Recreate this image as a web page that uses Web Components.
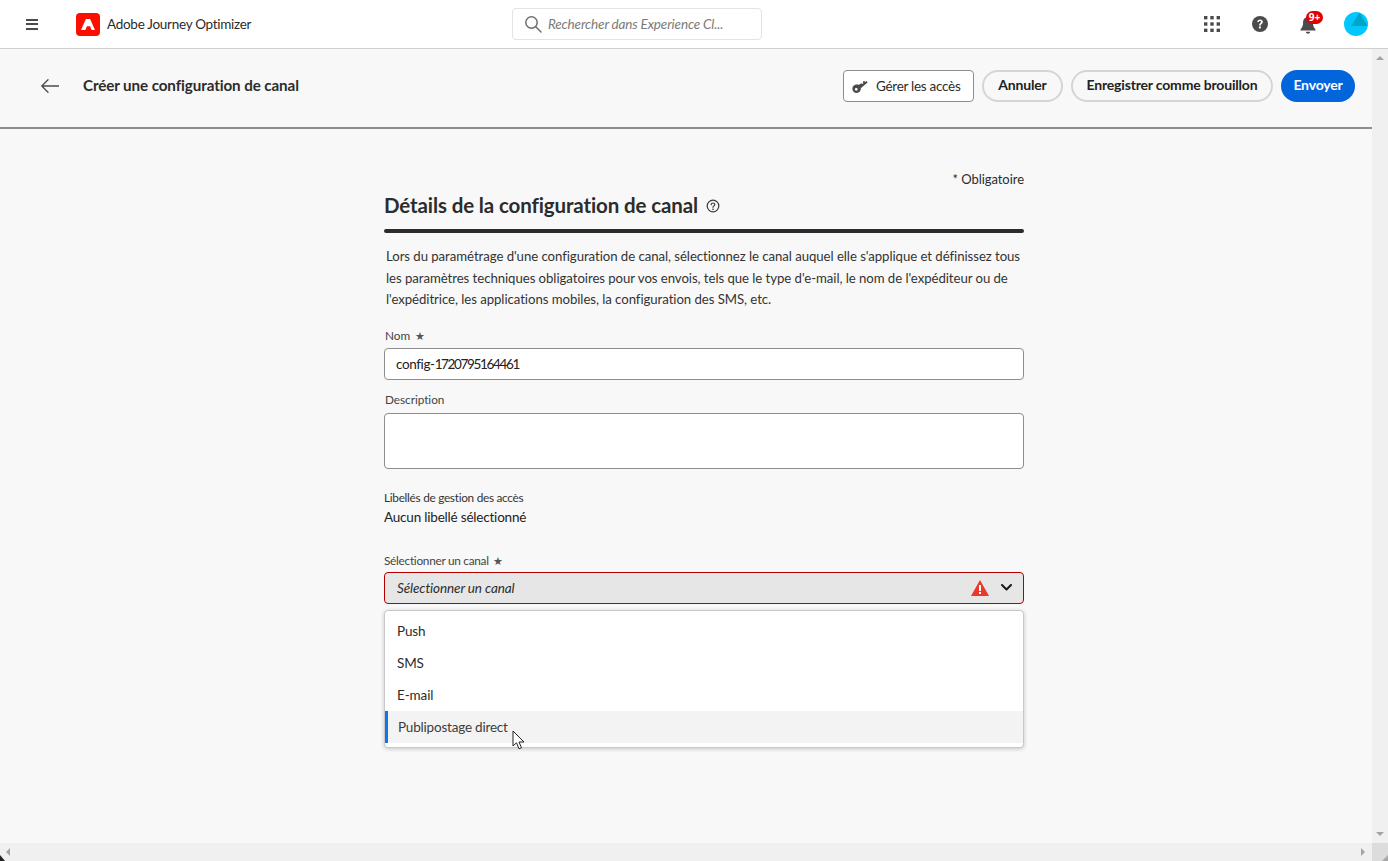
<!DOCTYPE html>
<html lang="fr"><head><meta charset="utf-8"><title>Adobe Journey Optimizer</title>
<style>
html,body{margin:0;height:100%;overflow:hidden}
body{font-family:Lato,"Open Sans",sans-serif;color:#222;background:#f8f8f8}
</style></head><body>
<ajo-app></ajo-app>
<script>
function def(name,css,html){
  customElements.define(name,class extends HTMLElement{
    constructor(){super();const r=this.attachShadow({mode:'open'});
      r.innerHTML='<style>'+css+'</style>'+html;}
  });
}
def('ajo-topbar',`
:host{display:flex;align-items:center;height:48px;background:#fff;border-bottom:1px solid #cfcfcf;position:relative;flex:none}
.burger{margin-left:26px;width:12px;display:flex;flex-direction:column;gap:2.5px}
.burger i{display:block;height:2px;background:#4b4b4b}
.logo{margin-left:38px;width:24px;height:23px;background:#fa0f00;border-radius:4px;display:flex;align-items:center;justify-content:center}
.name{margin-left:7px;width:144px;font-size:13.5px;color:#2c2c2c;letter-spacing:-.28px;white-space:nowrap}
.search{margin-left:261px;width:248px;height:30px;border:1px solid #e3e3e3;border-radius:4px;display:flex;align-items:center}
.search svg{margin-left:11px}
.search span{margin-left:6px;font-size:13.5px;font-style:italic;color:#7a7a7a;letter-spacing:-.15px;white-space:nowrap}
.right{margin-left:auto;display:flex;align-items:center;margin-right:20px}
.bell{position:relative;width:18px;height:20px;margin-left:32px}
.badge{position:absolute;left:6px;top:-3px;width:17px;height:13px;background:#e30000;color:#fff;border-radius:7px;font:700 10px/13px "Open Sans",sans-serif;text-align:center}
.avatar{margin-left:26px;display:block}
.help{margin-left:32px;display:block}
`,`
<div class="burger"><i></i><i></i><i></i></div>
<div class="logo"><svg width="14" height="11" viewBox="0 0 14 11"><path fill="#fff" d="M4.900 0h4.200L14 11h-3.400L9.100 7.300H6l2-4.600L4.300 11H0z"/></svg></div>
<div class="name">Adobe Journey Optimizer</div>
<div class="search"><svg width="18" height="18" viewBox="0 0 18 18" fill="none" stroke="#6e6e6e" stroke-width="1.5"><circle cx="7.5" cy="7.5" r="5.7"/><path d="M11.8 11.8 17 17" stroke-linecap="round"/></svg><span>Rechercher dans Experience Cl...</span></div>
<div class="right">
<svg width="16" height="16" viewBox="0 0 16 16" fill="#4b4b4b"><rect x="0" y="0" width="3.4" height="3.4"/><rect x="6.3" y="0" width="3.4" height="3.4"/><rect x="12.6" y="0" width="3.4" height="3.4"/><rect x="0" y="6.3" width="3.4" height="3.4"/><rect x="6.3" y="6.3" width="3.4" height="3.4"/><rect x="12.6" y="6.3" width="3.4" height="3.4"/><rect x="0" y="12.6" width="3.4" height="3.4"/><rect x="6.3" y="12.6" width="3.4" height="3.4"/><rect x="12.6" y="12.6" width="3.4" height="3.4"/></svg>
<svg class="help" width="16" height="16" viewBox="0 0 17 17"><circle cx="8.5" cy="8.5" r="8.5" fill="#4b4b4b"/><path d="M5.500 6.400c.2-1.700 1.400-2.700 3.100-2.700 1.800 0 3 1 3 2.500 0 2-2.200 2.100-2.200 3.900H7.500c-.1-2.500 2-2.600 2-3.800 0-.6-.4-1-1-1-.8 0-1.100.5-1.200 1.200z" fill="#fff"/><rect x="7.400" y="11" width="2" height="2.200" fill="#fff"/></svg>
<div class="bell"><svg width="16" height="20" viewBox="0 0 16 20" fill="#4b4b4b" style="position:absolute;left:0;top:2px"><path d="M8 1c-3 0-4.900 2.300-4.900 5.300 0 3.800-.9 5.200-2.600 7.100v1.100h15v-1.100c-1.700-1.900-2.600-3.300-2.600-7.100C12.900 3.300 11 1 8 1z"/><path d="M5.800 15.800h4.400c-.2 1.300-1.100 2-2.200 2s-2-.7-2.200-2z"/></svg><div class="badge">9+</div></div>
<svg class="avatar" width="24" height="24" viewBox="0 0 24 24"><circle cx="12" cy="12" r="12" fill="#00c8ff"/><path d="M15.500 .6 23.600 14H7z" fill="#00a5c8"/></svg>
</div>`);

def('ajo-button',`
:host{display:inline-flex;align-items:center;justify-content:center;box-sizing:border-box;height:32px;border-radius:16px;border:2px solid #d5d5d5;background:#f8f8f8;color:#222;font-size:14px;font-weight:700;letter-spacing:-.18px;white-space:nowrap;flex:none;padding-bottom:3px}
:host([variant=primary]){background:#0265dc;border-color:#0265dc;color:#fff}
:host([variant=quiet]){border:1px solid #8e8e8e;border-radius:4px;background:#fff;font-weight:400;font-size:13.5px;letter-spacing:-.28px;color:#2c2c2c;justify-content:flex-start;padding:0 0 0 8px}
`,`<slot></slot>`);

def('ajo-actionbar',`
:host{display:flex;align-items:center;height:74px;padding-bottom:4px;border-bottom:2px solid #8e8e8e;flex:none;background:#f8f8f8}
.back{margin-left:41px;display:block}
h1{margin:0 0 2px 24px;font-size:15.2px;font-weight:700;color:#2c2c2c;letter-spacing:-.1px;white-space:nowrap}
.acts{margin-left:auto;margin-right:17px;display:flex;gap:8px;align-items:center}
svg.key{margin-right:7px;flex:none}
`,`
<svg class="back" width="18" height="14" viewBox="0 0 18 14" fill="none" stroke="#4b4b4b" stroke-width="1.3" stroke-linecap="round" stroke-linejoin="round"><path d="M17.500 7H.8M7 .8.800 7 7 13.200"/></svg>
<h1>Créer une configuration de canal</h1>
<div class="acts">
<ajo-button variant="quiet" style="width:131px"><svg class="key" width="17" height="16" viewBox="0 0 18 16" fill="#4b4b4b" style="vertical-align:middle"><path d="M5.500 6.500a4.500 4.500 0 1 0 3.800 3.800l7.200-6-.9-1.700-1.700 1.200-1.100-1.300-1.500 1.200.8 1.300-1.200 1-.9-1L7.400 6.800a4.500 4.500 0 0 0-1.900-.3zM4.500 10a1.500 1.500 0 1 1 0 3 1.500 1.500 0 0 1 0-3z" fill-rule="evenodd"/></svg>Gérer les accès</ajo-button>
<ajo-button style="width:81px">Annuler</ajo-button>
<ajo-button style="width:202px">Enregistrer comme brouillon</ajo-button>
<ajo-button variant="primary" style="width:74px">Envoyer</ajo-button>
</div>`);

def('ajo-field',`
:host{display:block}
label{display:block;font-size:11.8px;color:#444;line-height:18px;margin-left:1px;white-space:nowrap;letter-spacing:-.05px}
:host([flush]) label{margin-left:0;letter-spacing:-.27px}
.box{margin-top:var(--gap,2px)}
`,`<label><slot name="label"></slot></label><div class="box"><slot></slot></div>`);

def('ajo-input',`
:host{display:flex;align-items:center;box-sizing:border-box;height:32px;background:#fff;border:1px solid #8e8e8e;border-radius:4px;padding:0 11px;font-size:13.5px;color:#222;letter-spacing:-.4px}
:host([tall]){height:56px}
`,`<slot></slot>`);

def('ajo-select',`
:host{display:flex;align-items:center;box-sizing:border-box;height:32px;background:#e6e6e6;border:1px solid #b40000;border-radius:4px;padding:0 11px 0 12px;font-size:13.5px;font-style:italic;color:#2c2c2c;letter-spacing:-.1px}
.sp{flex:1}
.warn{margin-right:12px;display:block}
`,`<slot></slot><span class="sp"></span>
<svg class="warn" width="18" height="16" viewBox="0 0 18 16"><path style="fill:#ea3829" d="M9 0 18 16H0z"/><rect x="8" y="5" width="2" height="6" fill="#fff"/><rect x="8" y="12" width="2" height="2" fill="#fff"/></svg>
<svg width="11" height="7" viewBox="0 0 11 7" fill="none" stroke="#1a1a1a" stroke-width="2" stroke-linecap="round" stroke-linejoin="round"><path d="M1 1l4.500 4.500L10 1"/></svg>`);

def('ajo-menu',`
:host{display:block;position:absolute;left:0;right:0;top:38px;box-sizing:border-box;height:138px;background:#fff;border:1px solid #c8c8c8;border-radius:4px;padding:4px 0;box-shadow:0 1px 4px rgba(0,0,0,.2);z-index:5}
`,`<slot></slot>`);

def('ajo-menu-item',`
:host{display:flex;align-items:center;height:32px;padding-left:12px;font-size:13.5px;color:#2c2c2c;box-sizing:border-box;letter-spacing:-.12px;white-space:nowrap}
:host([active]){background:#f3f3f3;border-left:3px solid #1473e6;padding-left:10px;color:#3c3c3c;letter-spacing:-.2px}
`,`<slot></slot>`);

def('ajo-form',`
:host{display:block;width:640px;margin-left:384px;position:relative}
.req{text-align:right;font-size:13px;line-height:16px;color:#2c2c2c;padding-top:42px;letter-spacing:-.05px}
h2{margin:4px 0 0;display:flex;align-items:center;font-size:20.5px;line-height:28px;font-weight:700;color:#2c2c2c;letter-spacing:-.12px;white-space:nowrap}
h2 svg{margin-left:8px;margin-top:2px}
.rule{height:4px;background:#2c2c2c;border-radius:2px;margin-top:10px}
p{margin:13px 0 0 2px;font-size:13.2px;line-height:21.5px;color:#333;letter-spacing:-.055px;width:640px;white-space:nowrap}
.name{margin-top:16px;--gap:3px}.desc{margin-top:11px;--gap:4px}
.lbl{margin-top:21px;font-size:11.8px;line-height:16px;color:#333;white-space:nowrap;letter-spacing:-.28px}
.val{font-size:13.5px;line-height:20px;margin-top:1px;color:#222;letter-spacing:-.2px}
.chan{margin-top:25px;position:relative}
.star{font-size:11px;margin-left:2px;color:#555;letter-spacing:0;line-height:1}
.num{letter-spacing:-1.35px}
`,`
<div class="req">* Obligatoire</div>
<h2>Détails de la configuration de canal<svg width="14" height="14" viewBox="0 0 14 14" fill="none" stroke="#3a3a3a" stroke-width="1.2"><circle cx="7" cy="7" r="5.8"/><path d="M5.200 5.600C5.300 4.600 6 4 7 4c1.100 0 1.800.6 1.800 1.500C8.800 6.800 7 6.900 7 8.300" stroke-linecap="round"/><circle cx="7" cy="10.200" r=".5" fill="#3a3a3a" stroke-width=".6"/></svg></h2>
<div class="rule"></div>
<p>Lors du paramétrage d'une configuration de canal, sélectionnez le canal auquel elle s'applique et définissez tous<br>les paramètres techniques obligatoires pour vos envois, tels que le type d'e-mail, le nom de l'expéditeur ou de<br>l'expéditrice, les applications mobiles, la configuration des SMS, etc.</p>
<ajo-field class="name"><span slot="label">Nom <span class="star">★</span></span><ajo-input><span>config-<span class="num">1720795164461</span></span></ajo-input></ajo-field>
<ajo-field class="desc"><span slot="label">Description</span><ajo-input tall></ajo-input></ajo-field>
<div class="lbl">Libellés de gestion des accès</div>
<div class="val">Aucun libellé sélectionné</div>
<div class="chan">
<ajo-field flush><span slot="label">Sélectionner un canal <span class="star">★</span></span>
<div style="position:relative"><ajo-select>Sélectionner un canal</ajo-select>
<ajo-menu><ajo-menu-item>Push</ajo-menu-item><ajo-menu-item>SMS</ajo-menu-item><ajo-menu-item>E-mail</ajo-menu-item><ajo-menu-item active>Publipostage direct</ajo-menu-item></ajo-menu>
<svg style="position:absolute;left:128px;top:158px;z-index:6;display:block" width="14" height="20" viewBox="0 0 14 20"><path d="M1 1v15l3.500-3.200 2.500 6 2.500-1-2.500-5.800h5z" fill="#fff" stroke="#222" stroke-width="1"/></svg>
</div></ajo-field>
</div>`);

def('ajo-app',`
:host{display:flex;flex-direction:column;height:861px;width:1388px;overflow:hidden;background:#f8f8f8;position:relative}
.mid{flex:1;display:flex;min-height:0}
.main{flex:1;min-width:0;display:flex;flex-direction:column}
.vbar,.hbar{background:#f0f0f0;flex:none;display:flex;box-sizing:border-box}
.vbar{width:16px;flex-direction:column;justify-content:space-between;align-items:center;padding:7px 0}
.hbar{height:18px;align-items:center;padding-left:6px}
.corner{width:16px;height:18px;background:#dcdcdc;position:relative}
.corner::after{content:"";position:absolute;right:0;bottom:0;border:3px solid transparent;border-right-color:#a8a8a8;border-bottom-color:#a8a8a8}
.t{width:0;height:0;display:block}
.u{border:4px solid transparent;border-top:0;border-bottom:4px solid #a3a3a3}
.d{border:4px solid transparent;border-bottom:0;border-top:4px solid #a3a3a3}
.l{border:4px solid transparent;border-left:0;border-right:4px solid #a3a3a3}
.r{border:4px solid transparent;border-right:0;border-left:4px solid #a3a3a3;margin-left:auto;margin-right:7px}
.grip{position:absolute;left:0;bottom:0;width:0;height:0;border-left:5px solid #222;border-top:6px solid transparent}
`,`
<ajo-topbar></ajo-topbar>
<div class="mid">
<div class="main"><ajo-actionbar></ajo-actionbar><ajo-form></ajo-form></div>
<div class="vbar"><span class="t u"></span><span class="t d"></span></div>
</div>
<div class="hbar"><span class="t l"></span><span class="t r"></span><div class="corner"></div></div>
<div class="grip"></div>`);
</script>
</body></html>
